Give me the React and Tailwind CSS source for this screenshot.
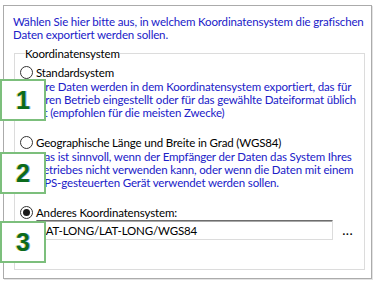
import React from "react";

const Radio = ({ checked, label }) => (
  <div className="flex items-center h-[16px]">
    <span className="w-[13px] h-[13px] rounded-full border border-[#333333] bg-white flex items-center justify-center">
      {checked && <span className="w-[7px] h-[7px] rounded-full bg-[#1a1a1a]" />}
    </span>
    <span className="ml-[3px] text-black whitespace-nowrap">{label}</span>
  </div>
);

const Desc = ({ lines }) => (
  <p className="pl-[16px] text-[#2020c8] whitespace-nowrap">
    {lines.map((l, i) => (
      <span key={i} className="block h-[13px]">
        {l}
      </span>
    ))}
  </p>
);

const Badge = ({ n, top }) => (
  <div
    className={`absolute left-0 ${top} w-[46px] h-[42px] border-2 border-[#7cbf7c] bg-white flex items-center justify-center`}
  >
    <span className="font-['Liberation_Sans',Arial,sans-serif] font-bold text-[25px] leading-none tracking-normal text-[#0b6b1c] [text-shadow:-1px_0_0_rgba(200,190,0,0.55),1px_0_0_rgba(20,80,200,0.5)]">
      {n}
    </span>
  </div>
);

export default function App() {
  return (
    <div className="relative w-[377px] h-[283px] bg-white overflow-hidden font-['Lato','Noto_Sans',sans-serif] text-[11.5px] tracking-[-0.15px] leading-[13px]">
      <div className="ml-[3px] mt-[5px] w-[369px] h-[274px] border border-[#ababab] shadow-[1px_1px_0_#e3e3e3] pt-[9px] pl-[9px]">
        <p className="text-[#2020c8] whitespace-nowrap">
          <span className="block">Wählen Sie hier bitte aus, in welchem Koordinatensystem die grafischen</span>
          <span className="block">Daten exportiert werden sollen.</span>
        </p>
        <fieldset className="mt-[6px] ml-[1px] w-[351px] border border-[#dcdcdc] pl-[5px] pb-[29px]">
          <legend className="ml-[5px] text-black">Koordinatensystem</legend>
          <div className="pt-[4px]">
            <Radio label="Standardsystem" />
            <Desc
              lines={[
                "Ihre Daten werden in dem Koordinatensystem exportiert, das für",
                "Ihren Betrieb eingestellt oder für das gewählte Dateiformat üblich",
                "ist (empfohlen für die meisten Zwecke)",
              ]}
            />
            <div className="mt-[15px]">
              <Radio label="Geographische Länge und Breite in Grad (WGS84)" />
            </div>
            <Desc
              lines={[
                "Das ist sinnvoll, wenn der Empfänger der Daten das System Ihres",
                "Betriebes nicht verwenden kann, oder wenn die Daten mit einem",
                "GPS-gesteuerten Gerät verwendet werden sollen.",
              ]}
            />
            <div className="mt-[15px]">
              <Radio checked label="Anderes Koordinatensystem:" />
            </div>
            <div className="flex items-center">
              <div className="ml-[16px] w-[297px] h-[20px] border border-[#dcdcdc] border-t-[#6d6d6d] shadow-[inset_0_1px_0_#a8a8a8] pl-[3px] flex items-center text-black">
                LAT-LONG/LAT-LONG/WGS84
              </div>
              <button className="ml-[4px] w-[22px] h-[20px] flex items-end justify-center pb-[3px] text-black font-bold tracking-[1px]">
                ...
              </button>
            </div>
          </div>
        </fieldset>
      </div>
      <Badge n="1" top="top-[79px]" />
      <Badge n="2" top="top-[152px]" />
      <Badge n="3" top="top-[221px]" />
    </div>
  );
}
